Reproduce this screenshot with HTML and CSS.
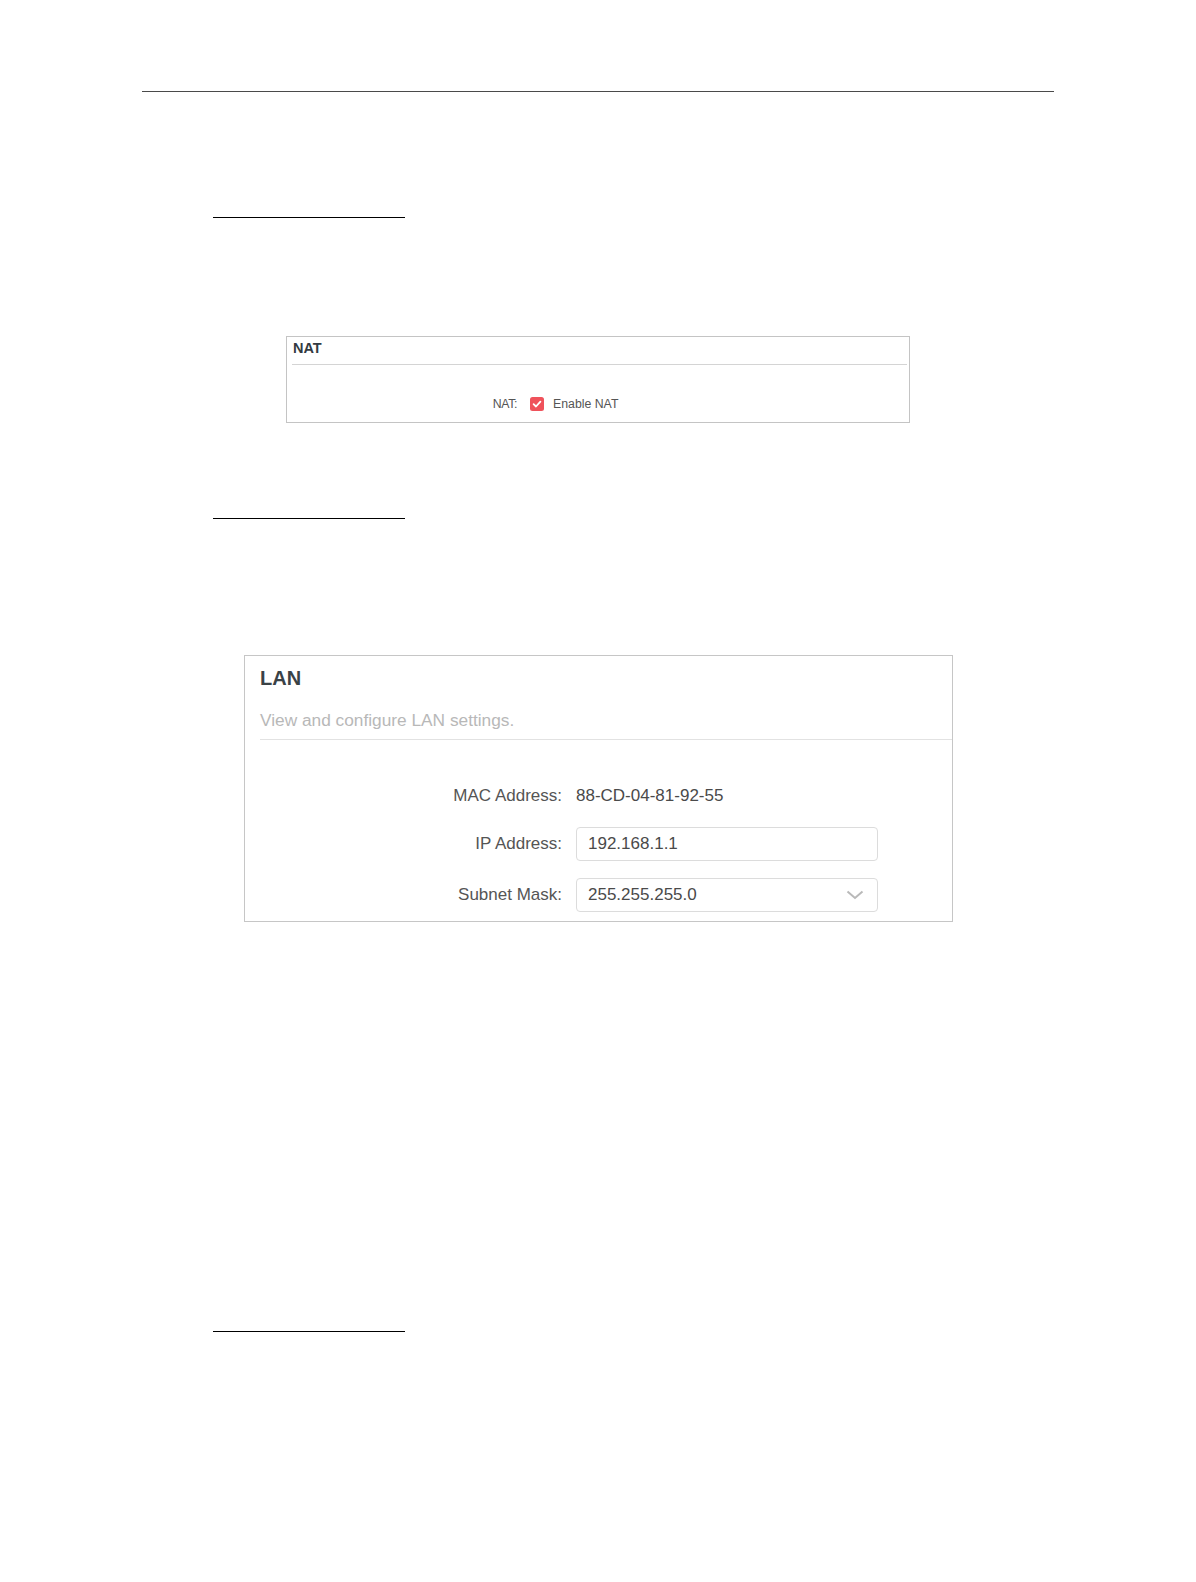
FILE: index.html
```html
<!DOCTYPE html>
<html lang="en">
<head>
    <meta charset="UTF-8">
    <meta name="viewport" content="width=device-width, initial-scale=1.0">
    <title>NAT and LAN</title>
    <link rel="stylesheet" href="styles.css">
</head>
<body>
    <div class="page">
        <hr class="page-rule">

        <div class="short-rule rule-first"></div>

        <div class="nat-card">
            <div class="nat-header">NAT</div>
            <div class="nat-body">
                <span class="nat-label">NAT:</span>
                <label class="check">
                    <svg class="check-box" width="14" height="14" viewBox="0 0 14 14">
                        <rect x="0" y="0" width="14" height="14" rx="2.5" fill="#ef525b"/>
                        <path d="M3.6 7.2 L6 9.5 L10.4 4.6" fill="none" stroke="#fff" stroke-width="1.8" stroke-linecap="round" stroke-linejoin="round"/>
                    </svg>
                    <span>Enable NAT</span>
                </label>
            </div>
        </div>

        <div class="short-rule rule-second"></div>

        <div class="lan-card">
            <div class="lan-header">
                <h2>LAN</h2>
                <p>View and configure LAN settings.</p>
            </div>
            <div class="lan-body">
                <div class="field field-static">
                    <span class="field-label">MAC Address:</span>
                    <span class="field-value">88-CD-04-81-92-55</span>
                </div>
                <div class="field">
                    <span class="field-label">IP Address:</span>
                    <div class="text-box">192.168.1.1</div>
                </div>
                <div class="field field-last">
                    <span class="field-label">Subnet Mask:</span>
                    <div class="text-box select-box">
                        255.255.255.0
                        <svg class="chevron" width="18" height="10" viewBox="0 0 18 10">
                            <path d="M1.5 1.5 L9 8 L16.5 1.5" fill="none" stroke="#b9b9b9" stroke-width="2"/>
                        </svg>
                    </div>
                </div>
            </div>
        </div>

        <div class="short-rule rule-third"></div>
    </div>
</body>
</html>
```

FILE: styles.css
```css
body {
    margin: 0;
    background-color: #fff;
    font-family: 'Liberation Sans', Arial, sans-serif;
}

.page {
    width: 912px;
    margin-left: 142px;
    padding-top: 91px;
    padding-bottom: 250px;
}

.page-rule {
    margin: 0;
    border: none;
    border-top: 1px solid #4a4a4a;
}

.short-rule {
    width: 192px;
    height: 1px;
    margin-left: 71px;
    background-color: #000;
}

.rule-first {
    margin-top: 125px;
}

.rule-second {
    margin-top: 95px;
}

.rule-third {
    margin-top: 409px;
}

/* NAT panel */
.nat-card {
    width: 622px;
    margin-top: 118px;
    margin-left: 144px;
    border: 1px solid #c4c4c4;
}

.nat-header {
    margin: 0 2px 0 5px;
    padding: 3px 0 7px 1px;
    border-bottom: 1px solid #d4d4d4;
    font-size: 14.5px;
    line-height: 17px;
    font-weight: bold;
    color: #333b42;
}

.nat-body {
    display: flex;
    align-items: center;
    height: 20px;
    padding: 29px 0 8px;
    font-size: 12.3px;
    color: #555;
}

.nat-label {
    width: 230px;
    text-align: right;
    letter-spacing: -0.4px;
}

.check {
    display: flex;
    align-items: center;
    gap: 9px;
    margin-left: 13px;
}

.check-box {
    display: block;
}

/* LAN panel */
.lan-card {
    width: 707px;
    margin-top: 136px;
    margin-left: 102px;
    border: 1px solid #c6c6c6;
}

.lan-header {
    margin-left: 15px;
    padding: 10px 0 9px;
    border-bottom: 1px solid #e2e2e2;
}

.lan-header h2 {
    margin: 0;
    font-size: 20px;
    line-height: 24px;
    color: #3a4246;
}

.lan-header p {
    margin: 20px 0 0;
    font-size: 17.3px;
    line-height: 20px;
    color: #b8b8b8;
}

.lan-body {
    display: flex;
    flex-direction: column;
    gap: 16px;
    padding: 37px 0 9px;
    font-size: 17px;
    color: #555;
}

.field {
    display: flex;
    align-items: center;
    gap: 14px;
    height: 34px;
}

.field-static {
    box-sizing: border-box;
    padding-top: 4px;
}

.field-last {
    margin-top: 1px;
}

.field-label {
    width: 317px;
    text-align: right;
}

.field-value {
    color: #4a4a4a;
}

.text-box {
    display: flex;
    align-items: center;
    box-sizing: border-box;
    width: 302px;
    height: 34px;
    padding: 0 10px 0 11px;
    border: 1px solid #dcdcdc;
    border-radius: 4px;
    color: #4a4a4a;
}

.select-box {
    justify-content: space-between;
    padding-right: 13px;
}

.chevron {
    display: block;
}
```
